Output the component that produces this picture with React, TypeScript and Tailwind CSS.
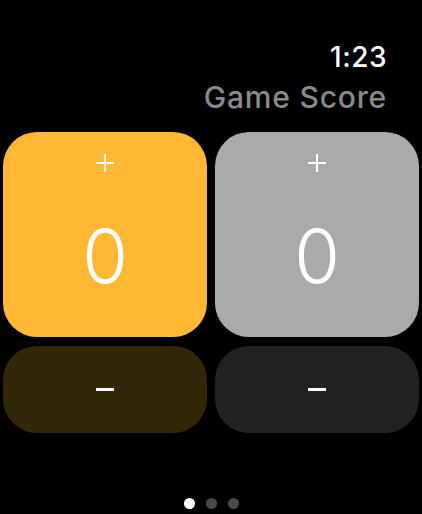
import type { ReactNode } from "react";

function ScoreTile({ bg, children }: { bg: string; children: ReactNode }) {
  return <div className={`flex flex-col items-center rounded-[34px] ${bg}`}>{children}</div>;
}

function Plus() {
  return (
    <svg width="20" height="20" viewBox="0 0 20 20" className="text-white">
      <path d="M10 1v18M1 10h18" stroke="currentColor" strokeWidth="2" />
    </svg>
  );
}

export default function App() {
  const teams = [
    { top: "bg-[#feb833]", bottom: "bg-[#33270a]", score: 0 },
    { top: "bg-[#aaaaaa]", bottom: "bg-[#222222]", score: 0 },
  ];

  return (
    <div
      className="flex h-[514px] w-[422px] flex-col bg-black text-white"
      style={{ fontFamily: "Inter, 'Noto Sans', sans-serif" }}
    >
      {/* header */}
      <div className="flex flex-col items-end pr-[35px] pt-[41px]">
        <div className="text-[28px] font-medium leading-[32px] tracking-[0.5px]">1:23</div>
        <div className="mt-[7px] text-[30px] font-medium leading-[34px] tracking-[0.8px] text-[#8a8a8a]">
          Game Score
        </div>
      </div>

      {/* tiles */}
      <div className="mt-[18px] grid grid-cols-2 gap-x-[8px] gap-y-[9px] px-[3px]">
        {teams.map((t, i) => (
          <ScoreTile key={i} bg={t.top}>
            <div className="flex h-[205px] flex-col items-center">
              <div className="mt-[21px]">
                <Plus />
              </div>
              <div className="mt-[38px] text-[74px] font-light leading-[90px]">{t.score}</div>
            </div>
          </ScoreTile>
        ))}
        {teams.map((t, i) => (
          <ScoreTile key={`b${i}`} bg={t.bottom}>
            <div className="flex h-[87px] items-center justify-center">
              <div className="h-[3px] w-[18px] bg-white" />
            </div>
          </ScoreTile>
        ))}
      </div>

      {/* page dots */}
      <div className="mt-auto mb-[5px] flex justify-center gap-[11px]">
        <div className="h-[11px] w-[11px] rounded-full bg-white" />
        <div className="h-[11px] w-[11px] rounded-full bg-[#4a4a4a]" />
        <div className="h-[11px] w-[11px] rounded-full bg-[#4a4a4a]" />
      </div>
    </div>
  );
}
